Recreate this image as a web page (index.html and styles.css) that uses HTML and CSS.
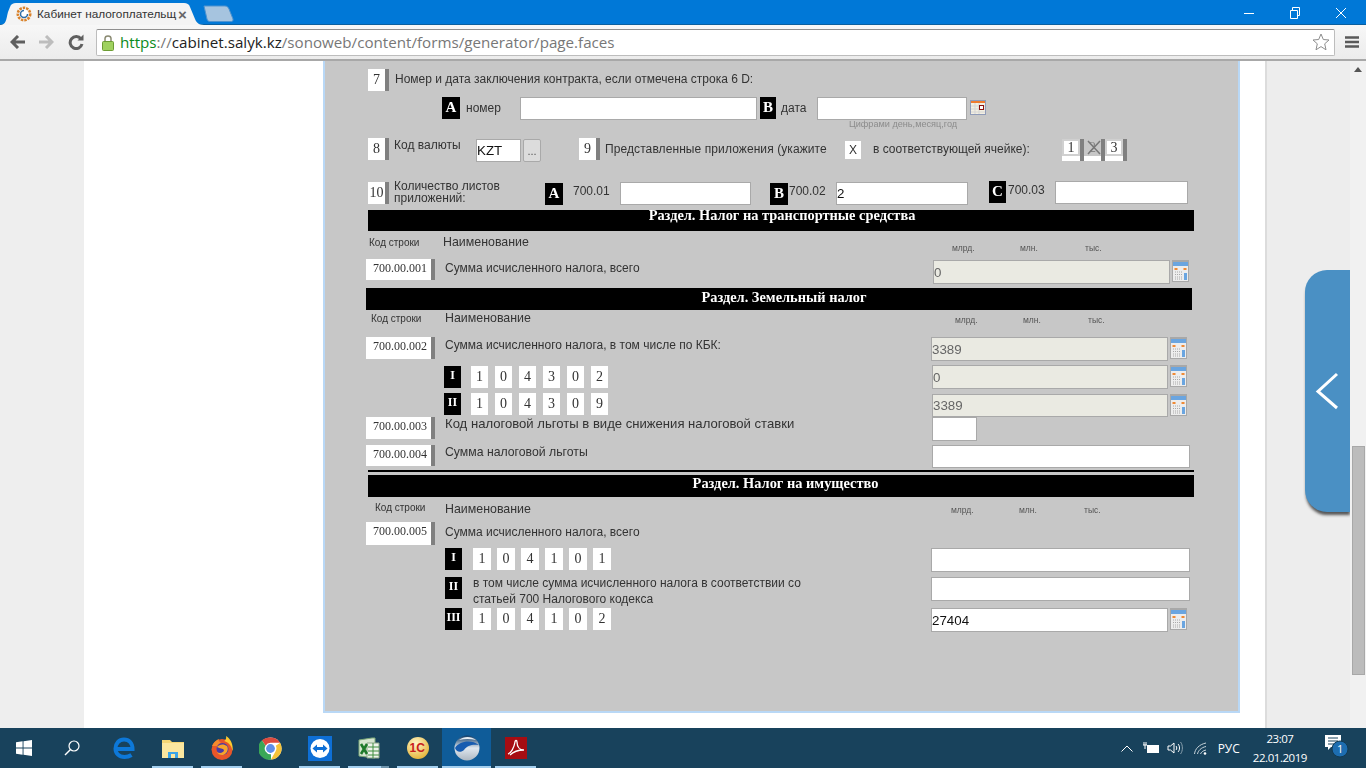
FILE: index.html
```html
<!DOCTYPE html>
<html lang="ru">
<head>
<meta charset="utf-8">
<title>Кабинет налогоплательщика</title>
<link rel="stylesheet" href="styles.css">
</head>
<body>
<header class="tabstrip">
  <div class="tab">
    <svg class="tab-shape" width="206" height="25" viewBox="0 0 206 25"><path d="M0 25C6 25 6 20 8 12L10 7C11 4 13 3 16 3H184C187 3 189 4 190 7L195 19C197 24 200 25 206 25Z" fill="#f4f4f4"/></svg>
    <svg class="favicon" width="16" height="16" viewBox="0 0 16 16"><circle cx="8" cy="8" r="6.2" fill="none" stroke="#d9822b" stroke-width="2.6" stroke-dasharray="2.4 1"/><circle cx="8" cy="8" r="4.4" fill="#fff"/><path d="M8 4.5A3.5 3.5 0 1 0 11.5 8" fill="none" stroke="#2f6ea8" stroke-width="1.5"/></svg>
    <span class="tab-title">Кабинет налогоплательщ</span>
    <span class="tab-close">×</span>
  </div>
  <svg class="newtab" width="31" height="17" viewBox="0 0 31 17"><path d="M1 1H22C24 1 25 2 26 4L30 14C30.500 16 29 16.500 28 16.500H7C5 16.500 4.500 15.500 4 14Z" fill="#a6c4df" stroke="#4f93cf"/></svg>
  <div class="winctl">
    <svg width="12" height="12" viewBox="0 0 12 12"><path d="M1 6.500H11" stroke="#fff"/></svg>
    <svg width="12" height="12" viewBox="0 0 12 12"><path d="M1.500 3.500H8.500V11.500H1.500ZM3.500 3.500V.5H10.500V8.500H8.500" fill="none" stroke="#fff"/></svg>
    <svg width="12" height="12" viewBox="0 0 12 12"><path d="M1 1L11 11M11 1L1 11" stroke="#fff"/></svg>
  </div>
</header>
<nav class="toolbar">
  <svg class="nav-back" width="16" height="14" viewBox="0 0 16 14"><path d="M8 1L2 7L8 13M2 7H15" fill="none" stroke="#5f5f5f" stroke-width="3"/></svg>
  <svg class="nav-fwd" width="16" height="14" viewBox="0 0 16 14"><path d="M8 1L14 7L8 13M14 7H1" fill="none" stroke="#bdbdbd" stroke-width="3"/></svg>
  <svg class="nav-reload" width="16" height="16" viewBox="0 0 16 16"><path d="M13 5A6 6 0 1 0 14 10" fill="none" stroke="#5f5f5f" stroke-width="3"/><path d="M9.500 6.500H15.500V.5Z" fill="#5f5f5f"/></svg>
  <div class="omnibox">
    <svg class="lock" width="12" height="17" viewBox="0 0 12 17"><path d="M3 8V4.500C3 1 9 1 9 4.500V8" fill="none" stroke="#8a8a72" stroke-width="1.500"/><rect x=".5" y="7.500" width="11" height="9" rx="1" fill="#9fd15f" stroke="#6c9c34"/></svg>
    <span class="url"><span class="url-https">https</span><span class="url-dim">://</span><span class="url-host">cabinet.salyk.kz</span><span class="url-dim">/sonoweb/content/forms/generator/page.faces</span></span>
    <svg class="star" width="18" height="18" viewBox="0 0 18 18"><path d="M9 1L11.300 6.500L17 7L12.700 10.800L14 16.800L9 13.600L4 16.800L5.300 10.800L1 7L6.700 6.500Z" fill="#fff" stroke="#8d8d8d"/></svg>
  </div>
  <svg class="menu" width="14" height="12" viewBox="0 0 14 12"><path d="M0 1.500H14M0 6H14M0 10.500H14" stroke="#5a5a5a" stroke-width="2.400"/></svg>
</nav>

<main class="page">
  <div class="gutter-left"></div>
  <div class="margin-left"></div>
  <form class="panel">
    <div class="row r7">
      <span class="qnum">7</span>
      <span class="lbl">Номер и дата заключения контракта, если отмечена строка 6 D:</span>
    </div>
    <div class="row ra">
      <span class="tag t-a">A</span>
      <span class="lbl l-nomer">номер</span>
      <input class="fld f-nomer" type="text">
      <span class="tag t-b">B</span>
      <span class="lbl l-data">дата</span>
      <div class="date-col">
        <input class="fld f-data" type="text">
        <span class="hint">Цифрами день,месяц,год</span>
      </div>
      <svg class="cal" width="16" height="15" viewBox="0 0 16 15"><rect x=".5" y=".5" width="15" height="14" fill="#f3efe2" stroke="#8f9bb8"/><rect x="1" y="1" width="14" height="2" fill="#ef7b2e"/><path d="M1 6H15M1 9H15M1 12H15M5 3V14M9 3V14" stroke="#d5d5d5"/><rect x="9.500" y="5.500" width="4" height="4" fill="#fff" stroke="#8c1010"/></svg>
    </div>
    <div class="row r8">
      <span class="qnum">8</span>
      <span class="lbl l-val">Код валюты</span>
      <input class="fld f-kzt" type="text" value="KZT">
      <button class="dots" type="button">...</button>
      <span class="qnum q9">9</span>
      <span class="lbl l-pril">Представленные приложения (укажите</span>
      <span class="xbox">X</span>
      <span class="lbl l-cell">в соответствующей ячейке):</span>
      <div class="checks">
        <span class="chk"><span class="chk-in">1</span></span>
        <span class="chk chk-off"><span class="chk-in">2<svg class="cross" width="16" height="15" viewBox="0 0 16 15"><path d="M2 1L14 14M14 1L2 14" stroke="#777" stroke-width="1.500"/></svg></span></span>
        <span class="chk"><span class="chk-in">3</span></span>
      </div>
    </div>
    <div class="row r10">
      <span class="qnum q10">10</span>
      <span class="lbl l-qty">Количество листов<br>приложений:</span>
      <span class="tag t-a2">A</span>
      <span class="lbl l-701">700.01</span>
      <input class="fld f-701" type="text">
      <span class="tag t-b2">B</span>
      <span class="lbl l-702">700.02</span>
      <input class="fld f-702" type="text" value="2">
      <span class="tag t-c2">C</span>
      <span class="lbl l-703">700.03</span>
      <input class="fld f-703" type="text">
    </div>

    <div class="section s1">Раздел. Налог на транспортные средства</div>
    <div class="row head h1">
      <span class="hcode">Код строки</span>
      <span class="hname">Наименование</span>
      <span class="unit u1">млрд.</span><span class="unit">млн.</span><span class="unit">тыс.</span>
    </div>
    <div class="row data d001">
      <span class="code">700.00.001</span>
      <span class="name n498">Сумма исчисленного налога, всего</span>
      <input class="fld ro v237" type="text" value="0" readonly>
      <svg class="calc" width="17" height="22" viewBox="0 0 17 22"><use href="#calc"/></svg>
    </div>

    <div class="section s2">Раздел. Земельный налог</div>
    <div class="row head h2">
      <span class="hcode">Код строки</span>
      <span class="hname">Наименование</span>
      <span class="unit u1">млрд.</span><span class="unit">млн.</span><span class="unit">тыс.</span>
    </div>
    <div class="row data d002">
      <span class="code">700.00.002</span>
      <span class="name n496">Сумма исчисленного налога, в том числе по КБК:</span>
      <input class="fld ro v237" type="text" value="3389" readonly>
      <svg class="calc" width="17" height="22" viewBox="0 0 17 22"><use href="#calc"/></svg>
    </div>
    <div class="row sub sub-i">
      <span class="rtag">I</span>
      <div class="kbk k461"><span class="dg">1</span><span class="dg">0</span><span class="dg">4</span><span class="dg">3</span><span class="dg">0</span><span class="dg">2</span></div>
      <input class="fld ro v236" type="text" value="0" readonly>
      <svg class="calc" width="17" height="22" viewBox="0 0 17 22"><use href="#calc"/></svg>
    </div>
    <div class="row sub sub-ii">
      <span class="rtag">II</span>
      <div class="kbk k461"><span class="dg">1</span><span class="dg">0</span><span class="dg">4</span><span class="dg">3</span><span class="dg">0</span><span class="dg">9</span></div>
      <input class="fld ro v236" type="text" value="3389" readonly>
      <svg class="calc" width="17" height="22" viewBox="0 0 17 22"><use href="#calc"/></svg>
    </div>
    <div class="row data d003">
      <span class="code">700.00.003</span>
      <span class="name n497 big">Код налоговой льготы в виде снижения налоговой ставки</span>
      <input class="fld v45" type="text">
    </div>
    <div class="row data d004">
      <span class="code">700.00.004</span>
      <span class="name n497 mid">Сумма налоговой льготы</span>
      <input class="fld v258" type="text">
    </div>

    <div class="rule"></div>
    <div class="section s3">Раздел. Налог на имущество</div>
    <div class="row head h3">
      <span class="hcode">Код строки</span>
      <span class="hname">Наименование</span>
      <span class="unit u1">млрд.</span><span class="unit">млн.</span><span class="unit">тыс.</span>
    </div>
    <div class="row data d005">
      <span class="code">700.00.005</span>
      <span class="name n496">Сумма исчисленного налога, всего</span>
    </div>
    <div class="row sub3 s3-i">
      <span class="rtag">I</span>
      <div class="kbk k458"><span class="dg">1</span><span class="dg">0</span><span class="dg">4</span><span class="dg">1</span><span class="dg">0</span><span class="dg">1</span></div>
      <input class="fld v259" type="text">
    </div>
    <div class="row sub3 s3-ii">
      <span class="rtag">II</span>
      <span class="lbl l-700">в том числе сумма исчисленного налога в соответствии со<br>статьей 700 Налогового кодекса</span>
      <input class="fld v259" type="text">
    </div>
    <div class="row sub3 s3-iii">
      <span class="rtag">III</span>
      <div class="kbk k458"><span class="dg">1</span><span class="dg">0</span><span class="dg">4</span><span class="dg">1</span><span class="dg">0</span><span class="dg">2</span></div>
      <input class="fld v237 val-dark" type="text" value="27404">
      <svg class="calc" width="17" height="22" viewBox="0 0 17 22"><use href="#calc"/></svg>
    </div>
  </form>
  <div class="margin-right"></div>
  <div class="gutter-right">
    <div class="sidetab">
      <svg width="24" height="38" viewBox="0 0 24 38"><path d="M22 2L3 19.500L22 36" fill="none" stroke="#fff" stroke-width="3"/></svg>
    </div>
  </div>
  <div class="scrollbar">
    <span class="sb-up"></span>
    <span class="sb-thumb"></span>
  </div>
</main>

<footer class="taskbar">
  <div class="tb-start"><svg width="16" height="16" viewBox="0 0 16 16"><path d="M0 2.300L6.600 1.300V7.500H0ZM7.500 1.200L16 0V7.500H7.500ZM0 8.500H6.600V14.700L0 13.700ZM7.500 8.500H16V16L7.500 14.800Z" fill="#fff"/></svg></div>
  <div class="tb-start tb-search"><svg width="16" height="16" viewBox="0 0 16 16"><circle cx="10" cy="6" r="5" fill="none" stroke="#fff" stroke-width="1.200"/><path d="M6.500 9.500L1 15" stroke="#fff" stroke-width="1.500"/></svg></div>
  <div class="tb-item">
    <svg width="22" height="22" viewBox="0 0 22 22"><path d="M4 12H19.500C19.500 6 16 2.500 11 2.500S2.500 6.500 2.500 11.500 6 20 11.500 20C14.500 20 16.500 19.300 18.500 18" fill="none" stroke="#0d78d8" stroke-width="4"/></svg>
  </div>
  <div class="tb-item on">
    <svg width="22" height="20" viewBox="0 0 22 20"><path d="M0 2H8L10 4H22V20H0Z" fill="#f4d675"/><path d="M0 5H22V20H0Z" fill="#fbe79f"/><path d="M6 14H16V20H6Z" fill="#3aa5e8"/><path d="M9 16H13V20H9Z" fill="#fbe79f"/></svg>
  </div>
  <div class="tb-item on">
    <svg width="22" height="24" viewBox="0 0 22 24"><circle cx="11" cy="13.500" r="10.500" fill="#e8562a"/><path d="M15 0C20 3 22.500 9 21.500 15C20.500 9 17 6 13 5C15 4 15.500 2 15 0Z" fill="#fdc82f"/><path d="M1 10C3 6 5 4 8 3C7 5 8 6 10 6L6 10Z" fill="#f58a2c"/><circle cx="11.500" cy="13" r="6" fill="#4b3aa6"/><path d="M6 11C8 8 13 7.500 16 10C18 13 16 18 12 19C9 19.500 7 18 6 16C9 18 13 16.500 13 14C12 12.500 9 12.500 6 11Z" fill="#f7a52b"/></svg>
  </div>
  <div class="tb-item">
    <svg width="23" height="23" viewBox="0 0 24 24"><circle cx="12" cy="12" r="11.500" fill="#fff"/><path d="M12 .5A11.500 11.500 0 0 1 22 6H12A6 6 0 0 0 6.800 9L3 3.500A11.500 11.500 0 0 1 12 .5Z" fill="#dd4b3e"/><path d="M22 6A11.500 11.500 0 0 1 12.500 23.500L17.200 15A6 6 0 0 0 17.500 9Z" fill="#f6c338"/><path d="M3 3.500L6.800 9A6 6 0 0 0 12.500 18L12.500 23.500A11.500 11.500 0 0 1 3 3.500Z" fill="#3aa757"/><circle cx="12" cy="12" r="4.600" fill="#5f8fe8"/></svg>
  </div>
  <div class="tb-item on">
    <svg width="24" height="25" viewBox="0 0 24 25"><rect width="24" height="25" fill="#0e6fd6"/><circle cx="12" cy="12.500" r="9.500" fill="#fff"/><path d="M4.500 12.500L9 8.500V11H15V8.500L19.500 12.500L15 16.500V14H9V16.500Z" fill="#0e6fd6"/></svg>
  </div>
  <div class="tb-item on split">
    <svg width="23" height="23" viewBox="0 0 23 23"><path d="M2 3L15 1H18V21L2 19Z" fill="#d7e6d0" stroke="#7da878"/><path d="M10 6H22V21H10Z" fill="#eef3ea" stroke="#8aa586"/><path d="M11 10H22M11 14H22M11 18H22M16 6V21" stroke="#3f8e3f"/><path d="M4 7L10 17M10 7L4 17" stroke="#1f7a2b" stroke-width="2.600"/></svg>
  </div>
  <div class="tb-item on">
    <svg width="22" height="22" viewBox="0 0 22 22"><defs><radialGradient id="onec" cx=".4" cy=".3" r=".8"><stop offset="0" stop-color="#fff6c8"/><stop offset="1" stop-color="#e3ad2b"/></radialGradient></defs><circle cx="11" cy="11" r="11" fill="url(#onec)"/><text class="onec-txt" x="2.500" y="15">1С</text></svg>
  </div>
  <div class="tb-item active">
    <svg width="26" height="26" viewBox="0 0 26 26"><defs><linearGradient id="sph" x1="0" y1="0" x2="0" y2="1"><stop offset="0" stop-color="#0e3a66"/><stop offset=".5" stop-color="#dfe7ee"/><stop offset="1" stop-color="#aeb8c2"/></linearGradient></defs><circle cx="13" cy="13" r="12.500" fill="url(#sph)"/><path d="M1 13C5 6 17 4 25 10C19 9 13 10 10 15C7 18 2 17 1 13Z" fill="#175cb0"/><path d="M5 5C10 1 17 1 22 5C16 3.500 11 3.500 5 5Z" fill="#e4ecf3"/></svg>
  </div>
  <div class="tb-item on">
    <svg width="22" height="22" viewBox="0 0 22 22"><rect width="22" height="22" fill="#a60d12"/><path d="M3 17C6 16 9 11 10 5C10 3 12 3 12 5C12 10 15 13 19 13C15 13 9 14 5 18" fill="none" stroke="#fff" stroke-width="1.300"/></svg>
  </div>
  <div class="tray">
    <svg class="ti-chev" width="12" height="7" viewBox="0 0 12 7"><path d="M.5 6.500L6 1L11.500 6.500" fill="none" stroke="#fff"/></svg>
    <svg class="ti-batt" width="16" height="12" viewBox="0 0 16 12"><rect x="4.500" y="3.500" width="11" height="7" fill="#fff" stroke="#fff"/><path d="M0 3H4M1 0V3M3 0V3M2 3V7" stroke="#fff"/></svg>
    <svg class="ti-spk" width="16" height="14" viewBox="0 0 16 14"><path d="M1 5H3.500L7 2V12L3.500 9H1Z" fill="none" stroke="#fff"/><path d="M9 5C10 6 10 8 9 9M11 3C13 5 13 9 11 11" fill="none" stroke="#fff"/><path d="M13.500 1C16 4 16 10 13.500 13" fill="none" stroke="#8aa0ae"/></svg>
    <svg class="ti-wifi" width="13" height="13" viewBox="0 0 13 13"><path d="M.5 12C1 7 5 2.500 12 1M3.500 12C4 9 7 5.500 12 4.500M6.500 12C7 10.500 9 8.500 12 8" fill="none" stroke="#c7d3da"/><circle cx="11" cy="11.500" r="1.300" fill="#fff"/></svg>
    <span class="lang">РУС</span>
    <span class="clock"><span>23:07</span><span>22.01.2019</span></span>
    <span class="notif">
      <svg width="24" height="26" viewBox="0 0 24 26"><path d="M0 0H16V12H6L3 15V12H0Z" fill="#fff"/><path d="M3 3H13M3 6H13M3 9H13" stroke="#18425c"/><circle cx="15" cy="14" r="8" fill="#1d6db0" stroke="#123a52"/></svg>
      <span class="notif-n">1</span>
    </span>
  </div>
</footer>

<svg class="defs" width="0" height="0">
  <symbol id="calc" viewBox="0 0 17 22">
    <rect width="17" height="22" fill="#a8a8a8"/>
    <rect x="1" y="3" width="15" height="18" fill="#ededed"/>
    <rect x="1" y="2" width="15" height="4" fill="#6aa5e0"/>
    <rect x="2.500" y="8" width="3" height="2" fill="#f08a35"/>
    <rect x="11.500" y="8" width="3" height="2" fill="#f08a35"/>
    <path d="M3 12H10M3 14.500H10M3 17H10M3 19H10" stroke="#a8a8a8" stroke-dasharray="1 1"/>
    <rect x="12" y="13" width="3" height="7" fill="#6aa5e0"/>
  </symbol>
</svg>
</body>
</html>
```
FILE: styles.css
```css
* { box-sizing: border-box; }
html, body { margin: 0; height: 100%; overflow: hidden; }
body {
  display: flex;
  flex-direction: column;
  width: 1366px;
  height: 768px;
  font-family: "Liberation Sans", Arial, sans-serif;
  background: #fff;
}

/* browser chrome */
.tabstrip {
  position: relative;
  display: flex;
  height: 25px;
  flex: none;
  background: #0078d7;
  border-bottom: 1px solid #0a5f9f;
}
.tab {
  position: relative;
  display: flex;
  align-items: center;
  width: 204px;
  height: 25px;
  padding: 3px 0 0 16px;
}
.tab-shape { position: absolute; left: 0; top: 0; }
.favicon { position: relative; flex: none; }
.tab-title {
  position: relative;
  width: 136px;
  margin-left: 5px;
  white-space: nowrap;
  font: 11.800px "Liberation Sans", sans-serif;
  color: #333;
}
.tab-close {
  position: relative;
  margin-left: 5px;
  font: bold 15px "Liberation Sans", sans-serif;
  color: #666;
}
.newtab { margin: 5px 0 0 -1px; }
.winctl {
  display: flex;
  gap: 34px;
  margin: 7px 0 0 auto;
  padding-right: 19px;
}
.toolbar {
  display: flex;
  align-items: center;
  flex: none;
  height: 36px;
  background: linear-gradient(#f7f7f7, #ececec);
  border-bottom: 2px solid #a8a8a8;
  padding-left: 10px;
}
.nav-fwd { margin-left: 12px; }
.nav-reload { margin-left: 14px; }
.omnibox {
  display: flex;
  align-items: center;
  width: 1239px;
  height: 27px;
  margin-left: 12px;
  padding: 0 4px 0 5px;
  background: #fff;
  border: 1px solid #bdbdbd;
  border-top-color: #8f8f8f;
  border-radius: 2px;
}
.url { margin-left: 6px; font: 15.160px "Open Sans", sans-serif; white-space: nowrap; }
.url-https { color: #0a8a20; }
.url-dim { color: #777; }
.url-host { color: #222; }
.star { margin-left: auto; }
.menu { margin-left: 10px; }

/* page frame */
.page { position: relative; display: flex; flex: none; height: 667px; overflow: hidden; }
.gutter-left { width: 84px; background: #eee; }
.margin-left { width: 239px; background: #fff; }
.panel {
  width: 917px;
  height: 652px;
  padding-top: 8px;
  background: #c7c7c7;
  border: 2px solid #b9d8f6;
  border-top: 0;
  overflow: hidden;
  will-change: transform;
}
.margin-right { width: 25px; }
.gutter-right {
  position: relative;
  width: 85px;
  background: #ededed;
  border-left: 2px solid #dcdcdc;
}
.sidetab {
  position: absolute;
  left: 38px;
  top: 209px;
  display: flex;
  align-items: center;
  width: 46px;
  height: 242px;
  padding-left: 10px;
  background: #4a90c4;
  border-radius: 22px 0 0 22px;
  box-shadow: 0 4px 3px -1px #555;
}
.scrollbar {
  position: relative;
  display: flex;
  flex-direction: column;
  align-items: center;
  width: 16px;
  background: #f1f1f1;
}
.sb-up {
  margin-top: 6px;
  border: 4px solid transparent;
  border-top: 0;
  border-bottom: 5px solid #555;
}
.sb-thumb {
  width: 13px;
  height: 229px;
  margin-top: 374px;
  background: #bcbcbc;
  border: 1px solid #a8a8a8;
}

/* form rows */
.row { display: flex; align-items: flex-start; }
.r7 { height: 28px; }
.ra { height: 41px; }
.r8 { height: 43px; }
.r10 { height: 29px; }
.lbl { font-size: 12px; line-height: 14px; color: #333; white-space: nowrap; }
.qnum {
  flex: none;
  width: 21px;
  height: 22px;
  margin-left: 43px;
  background: #fff;
  border-right: 4px solid #808080;
  font: 14px/22px "Liberation Serif", serif;
  color: #333;
  text-align: center;
}
.r7 .lbl { margin: 3px 0 0 6px; }
.tag {
  flex: none;
  width: 18px;
  height: 22px;
  background: #000;
  color: #fff;
  font: bold 15px/21px "Liberation Serif", serif;
  text-align: center;
}
.fld {
  display: block;
  flex: none;
  height: 23px;
  margin: 0;
  padding: 0;
  background: #fff;
  border: 1px solid #a9a9a9;
  border-radius: 0;
  font: 13.330px "Liberation Sans", sans-serif;
  color: #111;
  outline: 0;
}
.t-a { margin-left: 117px; }
.l-nomer { width: 54px; margin: 4px 0 0 6px; }
.f-nomer { width: 237px; }
.t-b { width: 16px; margin-left: 3px; }
.l-data { width: 36px; margin: 4px 0 0 5px; }
.date-col { display: flex; flex-direction: column; width: 150px; }
.f-data { width: 150px; }
.hint {
  margin: 0 0 0 32px;
  font-size: 9.150px;
  line-height: 9px;
  color: #8c8c8c;
  white-space: nowrap;
}
.cal { flex: none; margin: 3px 0 0 3px; }

.l-val { width: 82px; margin-left: 5px; }
.f-kzt { width: 45px; margin-top: 1px; }
.dots {
  flex: none;
  width: 18px;
  height: 23px;
  margin: 1px 0 0 2px;
  padding: 0;
  background: #dcdcdc;
  border: 1px solid #a9a9a9;
  border-radius: 2px;
  font: 11px "Liberation Sans", sans-serif;
  color: #555;
}
.q9 { margin-left: 38px; }
.l-pril { width: 240px; margin: 4px 0 0 5px; letter-spacing: .09px; }
.xbox {
  flex: none;
  width: 16px;
  height: 18px;
  margin-top: 3px;
  background: #fff;
  font-size: 12px;
  line-height: 18px;
  color: #333;
  text-align: center;
}
.l-cell { width: 189px; margin: 4px 0 0 12px; }
.checks { display: flex; margin-top: 1px; }
.chk {
  width: 22px;
  height: 22px;
  background: #fff;
  border-right: 4px solid #808080;
}
.chk-off { width: 21px; }
.chk-in {
  position: relative;
  display: block;
  height: 17px;
  background: #fff;
  border: 2px solid #d0d0d0;
  font: 14px/13px "Liberation Serif", serif;
  color: #333;
  text-align: center;
}
.chk-off .chk-in { background: #c7c7c7; border-color: #c7c7c7; color: #888; }
.cross { position: absolute; left: 0; top: -1px; }

.q10 { margin-top: 1px; }
.l-qty { width: 151px; margin: -1px 0 0 5px; line-height: 12px; }
.t-a2 { margin-top: 2px; }
.l-701 { width: 47px; margin: 3px 0 0 10px; }
.f-701 { width: 131px; margin-top: 1px; }
.t-b2 { margin: 2px 0 0 19px; }
.l-702 { width: 47px; margin: 3px 0 0 1px; }
.f-702 { width: 132px; margin-top: 1px; }
.t-c2 { width: 17px; margin-left: 21px; }
.l-703 { width: 47px; margin: 2px 0 0 2px; }
.f-703 { width: 133px; }

/* sections */
.section {
  width: 826px;
  background: #000;
  color: #fff;
  font: bold 14.400px "Liberation Serif", serif;
  text-align: center;
  white-space: nowrap;
}
.s1 { height: 21px; margin-left: 43px; padding-left: 2px; line-height: 11px; }
.s2 { height: 22px; margin-left: 41px; padding-left: 10px; line-height: 18px; }
.s3 { height: 22px; margin-left: 43px; padding-left: 9px; line-height: 17px; }
.rule { width: 826px; height: 2px; margin: 0 0 3px 43px; background: #000; }

.hcode { flex: none; font-size: 10px; line-height: 12px; color: #333; white-space: nowrap; }
.hname { flex: none; font-size: 12.400px; line-height: 14px; color: #333; white-space: nowrap; }
.unit { flex: none; width: 65px; font-size: 8.500px; line-height: 10px; color: #555; white-space: nowrap; }
.u1 { width: 68px; }
.h1 { height: 28px; }
.h1 .hcode { width: 74px; margin: 6px 0 0 44px; }
.h1 .hname { width: 509px; margin-top: 4px; }
.h1 .unit { margin-top: 12px; }
.h2 { height: 27px; }
.h2 .hcode { width: 74px; margin: 3px 0 0 46px; }
.h2 .hname { width: 510px; margin-top: 1px; }
.h2 .unit { margin-top: 5px; }
.h3 { height: 25px; }
.h3 .hcode { width: 70px; margin: 5px 0 0 50px; }
.h3 .hname { width: 506px; margin-top: 5px; }
.h3 .unit { margin-top: 8px; }

.code {
  flex: none;
  width: 69px;
  height: 22px;
  margin-left: 41px;
  padding-left: 3px;
  background: #fff;
  border-right: 4px solid #808080;
  font: 12px/18px "Liberation Serif", serif;
  color: #333;
  text-align: center;
}
.name {
  flex: none;
  padding-left: 10px;
  font-size: 12px;
  line-height: 14px;
  color: #333;
  white-space: nowrap;
}
.big { font-size: 13.100px; }
.mid { font-size: 12.250px; }
.n496 { width: 496px; }
.n497 { width: 497px; }
.n498 { width: 498px; }
.ro { background: #eaeae2; color: #666; }
.v237 { width: 237px; height: 24px; }
.v236 { width: 236px; height: 24px; }
.v45 { width: 45px; height: 24px; }
.v258 { width: 258px; }
.v259 { width: 259px; height: 24px; }
.val-dark { color: #111; }
.calc { flex: none; margin-left: 2px; }

.d001 { height: 29px; }
.d001 .code { height: 21px; }
.d001 .name { margin-top: 2px; }
.d001 .fld { margin-top: 1px; }
.d001 .calc { margin-top: 1px; }
.d002 { height: 28px; }
.d002 .name { margin-top: 1px; }
.d003 { height: 28px; }
.d004 { height: 25px; }
.d004 .code { height: 21px; }
.d005 { height: 26px; }
.d005 .code { height: 23px; }
.d005 .name { margin-top: 3px; }

.rtag {
  flex: none;
  width: 17px;
  height: 22px;
  margin-left: 119px;
  background: #000;
  color: #fff;
  font: bold 12px/18px "Liberation Serif", serif;
  text-align: center;
}
.kbk { display: flex; flex: none; gap: 7px; margin-left: 10px; }
.k461 { width: 461px; }
.k458 { width: 458px; margin-left: 11px; gap: 6px; }
.dg {
  flex: none;
  width: 17px;
  height: 22px;
  background: #fff;
  font: 14px/22px "Liberation Serif", serif;
  color: #333;
  text-align: center;
}
.k458 .dg { width: 18px; }
.sub { height: 28px; }
.sub-i .rtag, .sub-i .kbk { margin-top: 1px; }
.sub-ii { height: 24px; }
.sub-ii .fld { height: 23px; margin-top: 1px; }
.sub-ii .calc { margin-top: 1px; }
.sub3 .rtag { margin-left: 120px; }
.s3-i { height: 29px; }
.s3-ii { height: 31px; }
.l-700 { width: 458px; margin: -2px 0 0 11px; line-height: 16px; }

/* taskbar */
.taskbar {
  display: flex;
  flex: none;
  height: 40px;
  background: #18425c;
}
.tb-start {
  display: flex;
  align-items: center;
  justify-content: center;
  width: 48px;
  margin-top: -1px;
}
.tb-search { margin-right: 3px; }
.tb-item {
  position: relative;
  display: flex;
  align-items: center;
  justify-content: center;
  width: 49px;
}
.tb-item.on::after, .tb-item.active::after {
  content: "";
  position: absolute;
  left: 4px;
  right: 4px;
  bottom: 0;
  height: 2px;
  background: #a3cfef;
}
.tb-item.active { background: #0f5c99; }
.tb-item.active::after { left: 0; right: 0; }
.tb-item.split::before {
  content: "";
  position: absolute;
  right: 4px;
  bottom: 0;
  z-index: 1;
  width: 8px;
  height: 2px;
  background: #6f95ad;
}
.onec-txt { font: bold 12px "Liberation Sans", sans-serif; fill: #c8201c; }
.tray {
  display: flex;
  align-items: center;
  margin-left: auto;
  padding-right: 17px;
  color: #fff;
}
.ti-batt { margin-left: 10px; }
.ti-spk { margin-left: 8px; }
.ti-wifi { margin-left: 11px; }
.lang { margin-left: 11px; font: 12px "Open Sans", sans-serif; }
.clock {
  display: flex;
  flex-direction: column;
  align-items: center;
  margin-left: 13px;
  font: 11.500px/19px "Open Sans", sans-serif;
  letter-spacing: -.45px;
}
.notif { position: relative; display: block; width: 24px; height: 26px; margin-left: 18px; }
.notif-n {
  position: absolute;
  left: 12px;
  top: 6px;
  width: 6px;
  font: 11px/16px "Open Sans", sans-serif;
  color: #fff;
}
.defs { position: absolute; }
```
